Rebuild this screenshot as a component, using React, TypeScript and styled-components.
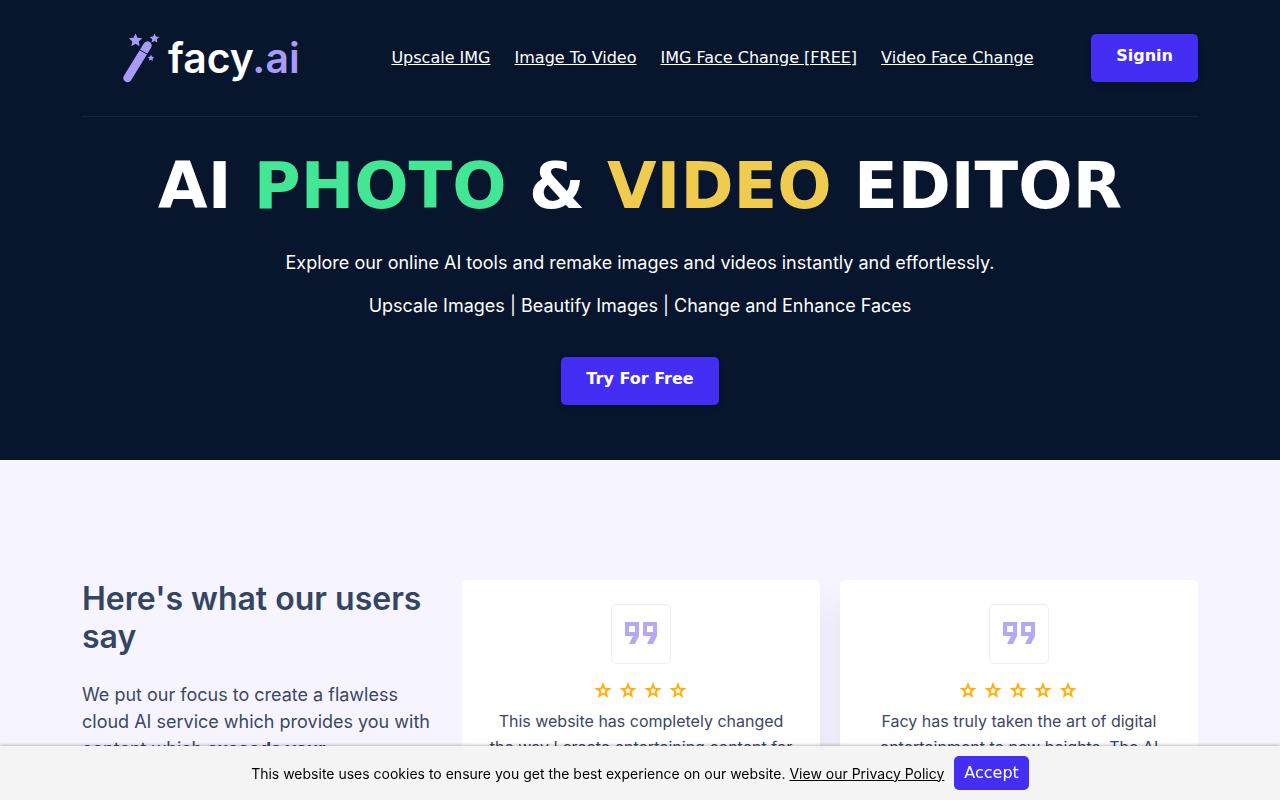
import React from "react";
import styled, { createGlobalStyle } from "styled-components";

const ui = `"DejaVu Sans", sans-serif`;
const copy = `Inter, sans-serif`;

const GlobalStyle = createGlobalStyle`
  *, *::before, *::after { box-sizing: border-box; }
  body { margin: 0; background: #f6f5ff; color: #344563; font-family: ${copy}; font-size: 16px; }
  h1, h2, p { margin: 0; }
`;

const Container = styled.div`
  width: 100%;
  max-width: 1140px;
  margin: 0 auto;
  padding: 0 12px;
`;

const Hero = styled.header`
  background: #07152d;
  color: #fff;
  padding-bottom: 55px;
`;

const TopBar = styled.div`
  display: flex;
  align-items: center;
  justify-content: space-between;
  height: 117px;
  border-bottom: 1px solid #18243d;
`;

const Logo = styled.a`
  display: flex;
  align-items: center;
  gap: 8px;
  margin-left: 40px;
  color: #fff;
  text-decoration: none;
  font: 600 41px/54px ${copy};
`;

const LogoAccent = styled.span`
  color: #a79bf7;
`;

const Nav = styled.nav`
  display: flex;
  gap: 24px;
  margin-left: 34px;
`;

const NavLink = styled.a`
  color: #fff;
  font: 16px/24px ${ui};
`;

const Button = styled.button`
  height: 48px;
  padding: 0 25px 4px;
  border: 0;
  border-radius: 5px;
  background: #452ef3;
  color: #fff;
  font: bold 16px/24px ${ui};
  box-shadow: 0 4px 8px rgba(0, 0, 0, 0.05);
`;

const Intro = styled.div`
  display: flex;
  flex-direction: column;
  align-items: center;
  padding-top: 30px;
  text-align: center;
`;

const Title = styled.h1`
  margin-bottom: 24px;
  font: bold 64px/78px ${ui};
`;

const Tint = styled.span<{ $color: string }>`
  color: ${(p) => p.$color};
`;

const Lead = styled.p`
  margin-bottom: 16px;
  font-size: 18px;
  line-height: 27px;
`;

const Action = styled.div`
  padding-top: 22px;
`;

const Reviews = styled.section`
  padding: 120px 0 80px;
`;

const ReviewsGrid = styled.div`
  display: grid;
  grid-template-columns: 1fr 2fr;
  column-gap: 12px;
`;

const Summary = styled.div`
  padding-right: 16px;
`;

const Heading = styled.h2`
  margin-bottom: 25px;
  font-size: 32px;
  font-weight: 600;
  line-height: 38px;
`;

const SummaryText = styled.p`
  color: #3b4763;
  font-size: 18px;
  line-height: 27px;
`;

const Cards = styled.div`
  display: grid;
  grid-template-columns: 1fr 1fr;
  gap: 20px;
  overflow: hidden;
`;

const Card = styled.article`
  display: flex;
  flex-direction: column;
  align-items: center;
  padding: 24px;
  border-radius: 5px;
  background: #fff;
  color: #3b4763;
  text-align: center;
  box-shadow: 0 20px 30px rgba(40, 30, 80, 0.08);
`;

const QuoteBox = styled.div`
  display: flex;
  justify-content: center;
  width: 60px;
  height: 60px;
  padding-top: 17px;
  border: 1px solid #efeef4;
  border-radius: 5px;
`;

const Stars = styled.div`
  display: flex;
  gap: 5px;
  margin: 16px 0 8px;
  padding-right: 2px;
`;

const ReviewText = styled.p`
  line-height: 26px;
`;

const CookieBar = styled.aside`
  position: fixed;
  right: 0;
  bottom: 0;
  left: 0;
  display: flex;
  align-items: center;
  justify-content: center;
  padding: 10px;
  background: #f4f4f4;
  color: #000;
  font-size: 14px;
  line-height: 21px;
  box-shadow: 0 0 4px rgba(0, 0, 0, 0.4);

  a { color: #000; }
`;

const Accept = styled.button`
  height: 34px;
  margin-left: 10px;
  padding: 0 10px;
  border: 0;
  border-radius: 5px;
  background: #452ef3;
  color: #fff;
  font: 16px/24px ${ui};
`;

const starPoints = (cx: number, cy: number, r: number, ratio = 0.48) =>
  Array.from({ length: 10 }, (_, i) => {
    const radius = i % 2 ? r * ratio : r;
    const angle = (Math.PI / 5) * i - Math.PI / 2;
    return `${cx + radius * Math.cos(angle)},${cy + radius * Math.sin(angle)}`;
  }).join(" ");

const Wand = () => (
  <svg width="38" height="50" viewBox="0 0 38 50" fill="#a79bf7" aria-hidden="true">
    <line x1="5.5" y1="45" x2="25.5" y2="12.5" stroke="#a79bf7" strokeWidth="8.4" strokeLinecap="round" />
    <line x1="17" y1="16.5" x2="27" y2="22" stroke="#07152d" strokeWidth="1" />
    <polygon points={starPoints(13.5, 7.5, 7)} />
    <polygon points={starPoints(32.5, 5.5, 5)} />
    <polygon points={starPoints(29, 25, 3.5)} />
  </svg>
);

const QuoteMark = () => (
  <svg width="32" height="22" viewBox="0 0 32 22" fill="#b5a9f6" fillRule="evenodd" aria-hidden="true">
    <path d="M0 0H14V14L10 22H4L8 14H0ZM4 4V10H10V4Z" />
    <path d="M18 0H32V14L28 22H22L26 14H18ZM22 4V10H28V4Z" />
  </svg>
);

const Star = () => (
  <svg width="20" height="20" viewBox="0 0 20 20" aria-hidden="true">
    <polygon points={starPoints(10, 10.8, 9, 0.42)} fill="#fdb010" />
    <polygon points={starPoints(10, 10.8, 3.3, 0.5)} fill="#fff" />
  </svg>
);

const links = ["Upscale IMG", "Image To Video", "IMG Face Change [FREE]", "Video Face Change"];

const reviews = [
  {
    stars: 4,
    text: "This website has completely changed the way I create entertaining content for my friends.",
  },
  {
    stars: 5,
    text: "Facy has truly taken the art of digital entertainment to new heights. The AI results are amazing.",
  },
];

export default function App() {
  return (
    <>
      <GlobalStyle />
      <Hero>
        <Container>
          <TopBar>
            <Logo href="#">
              <Wand />
              <span>facy<LogoAccent>.ai</LogoAccent></span>
            </Logo>
            <Nav>
              {links.map((label) => (
                <NavLink key={label} href="#">{label}</NavLink>
              ))}
            </Nav>
            <Button type="button">Signin</Button>
          </TopBar>
          <Intro>
            <Title>
              AI <Tint $color="#42e695">PHOTO</Tint> &amp; <Tint $color="#efcb50">VIDEO</Tint> EDITOR
            </Title>
            <Lead>Explore our online AI tools and remake images and videos instantly and effortlessly.</Lead>
            <Lead>Upscale Images | Beautify Images | Change and Enhance Faces</Lead>
            <Action>
              <Button type="button">Try For Free</Button>
            </Action>
          </Intro>
        </Container>
      </Hero>
      <Reviews>
        <Container>
          <ReviewsGrid>
            <Summary>
              <Heading>Here's what our users say</Heading>
              <SummaryText>
                We put our focus to create a flawless cloud AI service which provides you with content
                which <strong>exceeds your expectations.</strong>
              </SummaryText>
            </Summary>
            <Cards>
              {reviews.map((review) => (
                <Card key={review.text}>
                  <QuoteBox><QuoteMark /></QuoteBox>
                  <Stars role="img" aria-label={`${review.stars} stars`}>
                    {Array.from({ length: review.stars }, (_, i) => (
                      <Star key={i} />
                    ))}
                  </Stars>
                  <ReviewText>{review.text}</ReviewText>
                </Card>
              ))}
            </Cards>
          </ReviewsGrid>
        </Container>
      </Reviews>
      <CookieBar aria-label="Cookie notice">
        <span>
          This website uses cookies to ensure you get the best experience on our website.{" "}
          <a href="#">View our Privacy Policy</a>
        </span>
        <Accept type="button">Accept</Accept>
      </CookieBar>
    </>
  );
}
